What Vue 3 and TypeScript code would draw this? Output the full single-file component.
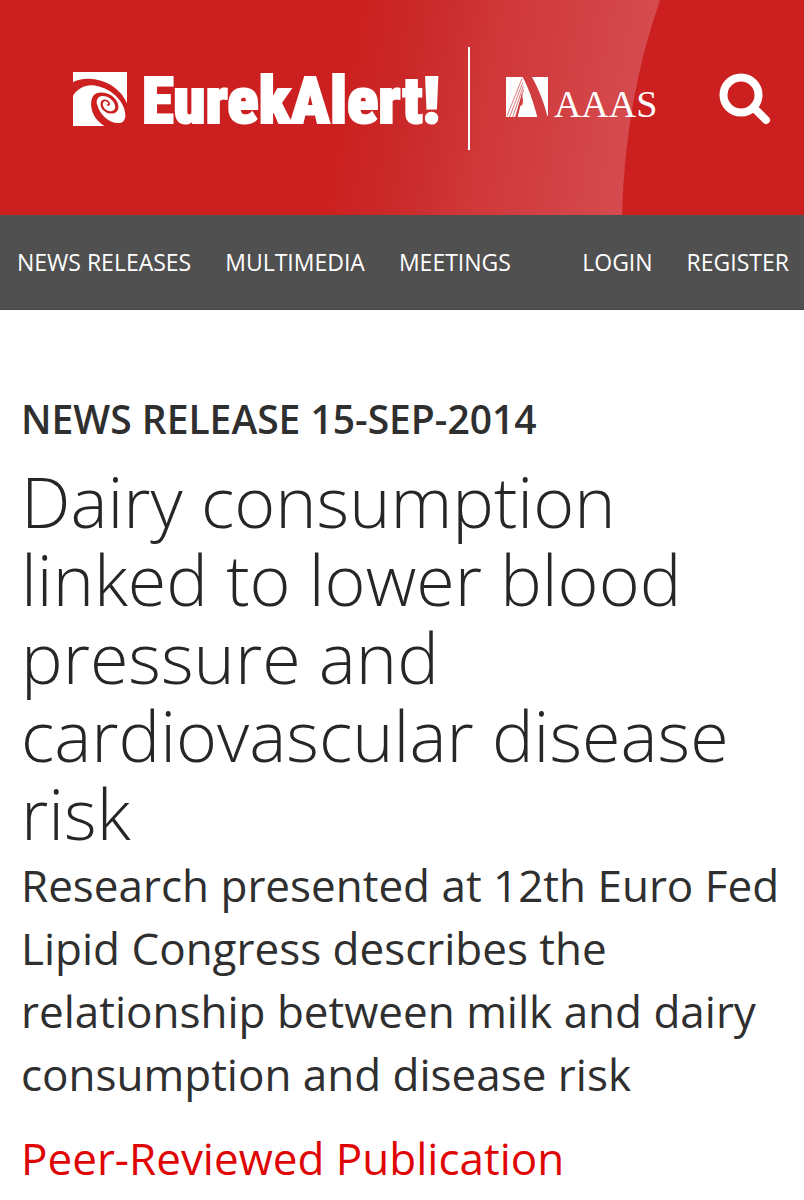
<script setup lang="ts">
interface NavItem {
  label: string
  href: string
}

const sections: NavItem[] = [
  { label: 'NEWS RELEASES', href: '#news' },
  { label: 'MULTIMEDIA', href: '#multimedia' },
  { label: 'MEETINGS', href: '#meetings' },
]

const account: NavItem[] = [
  { label: 'LOGIN', href: '#login' },
  { label: 'REGISTER', href: '#register' },
]
</script>

<template>
  <div class="page">
    <header class="banner">
      <svg class="sheen" viewBox="0 0 804 215" preserveAspectRatio="none" aria-hidden="true">
        <defs>
          <linearGradient id="sheen-fade" gradientUnits="userSpaceOnUse" x1="360" y1="0" x2="650" y2="51">
            <stop offset="0" stop-color="#cc2020" />
            <stop offset="0.2" stop-color="#ca2828" />
            <stop offset="0.5" stop-color="#d0383a" />
            <stop offset="0.75" stop-color="#d24144" />
            <stop offset="1" stop-color="#d54b4f" />
          </linearGradient>
        </defs>
        <path d="M300 0H660Q625 100 622 215H300Z" fill="url(#sheen-fade)" />
      </svg>

      <a class="brand" href="#home" aria-label="EurekAlert! home">
        <svg class="swirl" viewBox="39 33 164 164" aria-hidden="true">
          <path d="M39 33H203V128C190 95 150 57 95 54C70 53 50 58 39 64Z" fill="#fff" />
          <path d="M39 105C52 84 72 73 95 73C150 76 198 120 198 165C197 182 189 188 176 188C150 188 120 165 112 130L100 150C108 170 120 185 135 197H39Z" fill="#fff" />
          <path d="M94 130C94 103 108 94 126 95C158 97 178 120 177 140C176 156 162 162 147 158C130 153 119 137 124 124C129 113 146 115 151 127C153 135 147 138 142 134L139 130C141 132 145 133 146 129C144 121 132 119 130 128C128 139 139 151 151 152C162 153 169 146 167 136C164 119 145 105 128 106C113 107 109 119 112 135C119 163 145 188 172 197H135C108 181 94 155 94 130Z" fill="#cc2020" />
        </svg>
        <span class="wordmark">EurekAlert!</span>
      </a>

      <span class="divider"></span>

      <a class="society" href="#aaas" aria-label="AAAS">
        <svg class="society-mark" viewBox="48 51 126 120" aria-hidden="true">
          <path d="M48 51H98C116 84 130 126 142 171H48Z" fill="#fff" />
          <path d="M126 51H174V168H172C163 132 148 90 126 51Z" fill="#fff" />
          <path d="M96 56L51 168M98 68L59 171M100 78L68 171M101 88L76 171" fill="none" stroke="#d03a3c" stroke-width="2" />
          <path d="M99 122L97 134L91 138L83 171H77L96 100Z" fill="#d03a3c" />
        </svg>
        <span class="society-name">AAAS</span>
      </a>

      <button class="search" type="button" aria-label="Search">
        <svg viewBox="0 0 52 52" aria-hidden="true">
          <circle cx="22" cy="22" r="17.5" fill="none" stroke="#fff" stroke-width="8" />
          <path d="M36 36L47 47" stroke="#fff" stroke-width="8" stroke-linecap="round" />
        </svg>
      </button>
    </header>

    <nav class="menu" aria-label="Main">
      <ul>
        <li v-for="item in sections" :key="item.label">
          <a :href="item.href">{{ item.label }}</a>
        </li>
      </ul>
      <ul>
        <li v-for="item in account" :key="item.label">
          <a :href="item.href">{{ item.label }}</a>
        </li>
      </ul>
    </nav>

    <main class="release">
      <p class="dateline">NEWS RELEASE 15-SEP-2014</p>
      <h1>Dairy consumption linked to lower blood pressure and cardiovascular disease risk</h1>
      <p class="summary">
        Research presented at 12th Euro Fed Lipid Congress describes the relationship between milk and dairy consumption and disease risk
      </p>
      <p class="kind">Peer-Reviewed Publication</p>
    </main>
  </div>
</template>

<style>
body {
  background: #fff;
}
</style>

<style scoped>
.page {
  font-family: "Open Sans", "Noto Sans", sans-serif;
  color: #2f2f2f;
}

a {
  color: inherit;
  text-decoration: none;
}

.banner {
  position: relative;
  display: flex;
  align-items: center;
  box-sizing: border-box;
  min-height: 215px;
  padding: 0 33px 18px 73px;
  background: #cc2020;
  color: #fff;
}

.sheen {
  position: absolute;
  inset: 0;
  width: 100%;
  height: 100%;
}

.brand,
.society,
.divider,
.search {
  position: relative;
}

.brand {
  display: flex;
  align-items: center;
  gap: 15px;
}

.swirl {
  flex: none;
  width: 54px;
  height: 54px;
}

.wordmark {
  padding-top: 4px;
  font: 900 65px/72px "Roboto Condensed", "Liberation Sans Narrow", "DejaVu Sans Condensed", sans-serif;
  -webkit-text-stroke: 2px #fff;
}

.divider {
  width: 2px;
  height: 103px;
  margin: 0 36px 0 28px;
  background: #fff;
}

.society {
  display: flex;
  align-items: baseline;
  gap: 6px;
  padding-top: 4px;
}

.society-mark {
  flex: none;
  width: 42px;
  height: 40px;
}

.society-name {
  font: 38px/40px "Liberation Serif", serif;
}

.search {
  margin-left: auto;
  padding: 0;
  border: 0;
  background: none;
}

.search svg {
  display: block;
  width: 52px;
  height: 52px;
}

.menu {
  display: flex;
  align-items: center;
  justify-content: space-between;
  box-sizing: border-box;
  min-height: 95px;
  padding: 0 15px 0 17px;
  border-bottom: 1px solid #444;
  background: #505050;
  color: #fff;
  font-size: 23px;
  line-height: 32px;
}

.menu ul {
  display: flex;
  gap: 34px;
  margin: 0;
  padding: 0;
  list-style: none;
}

.release {
  padding: 79px 21px 0;
}

.release p,
.release h1 {
  margin: 0;
}

.release .dateline {
  margin-bottom: 13px;
  font-size: 39px;
  font-weight: 600;
  line-height: 60px;
}

.release h1 {
  margin-bottom: 2px;
  color: #262626;
  font-size: 70px;
  font-weight: 300;
  line-height: 78px;
}

.release .summary,
.release .kind {
  font-size: 44px;
  line-height: 63px;
}

.release .kind {
  margin-top: 21px;
  color: #e00505;
}
</style>
